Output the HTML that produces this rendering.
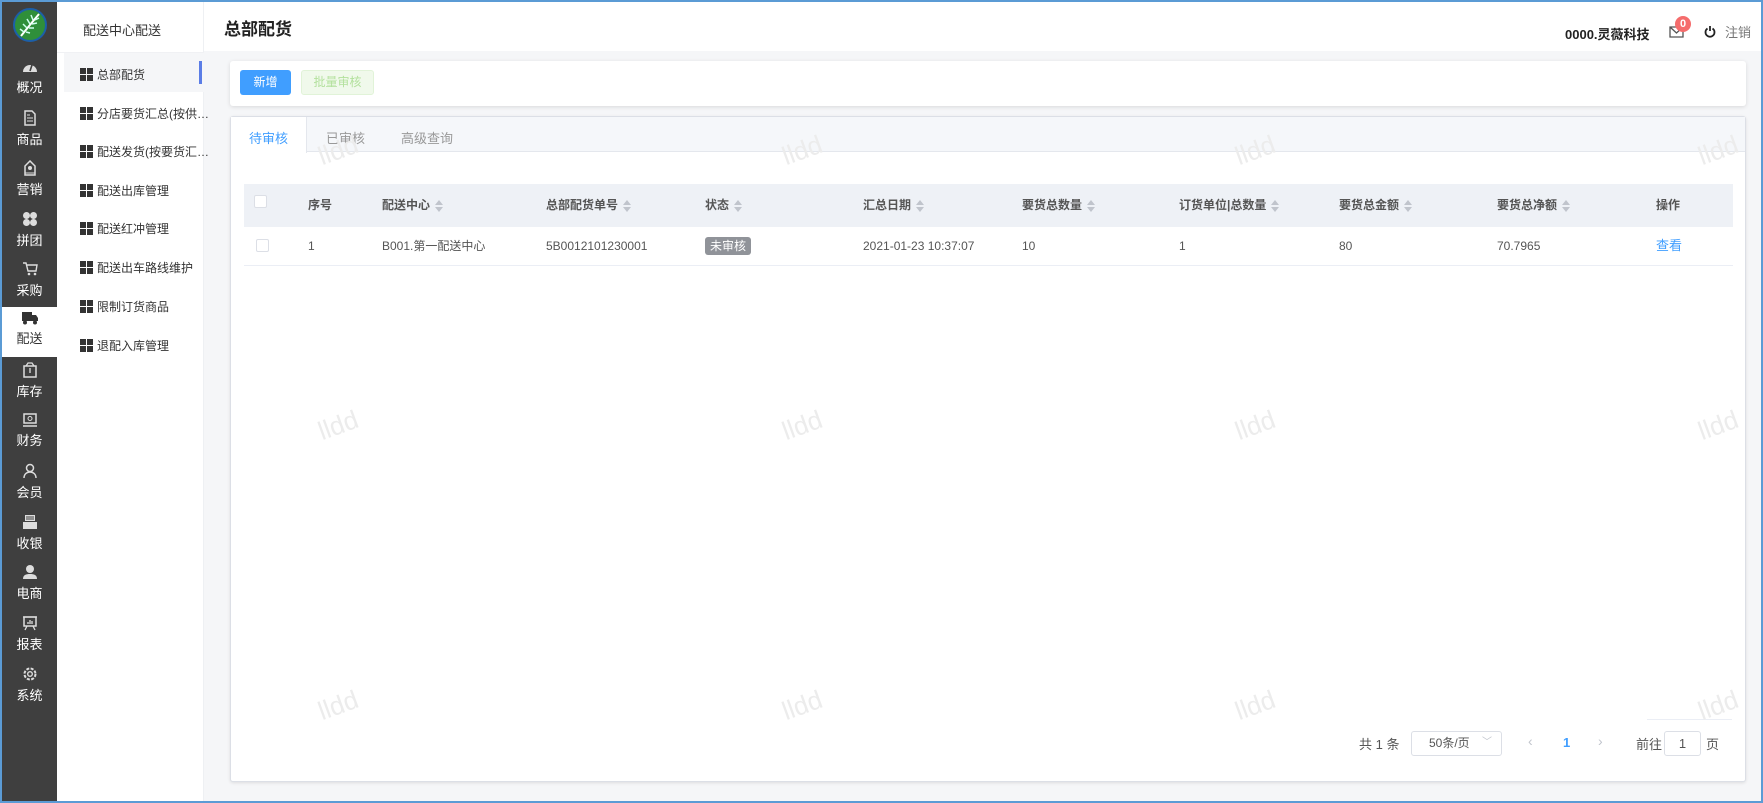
<!DOCTYPE html>
<html><head><meta charset="utf-8"><style>
*{margin:0;padding:0;box-sizing:border-box}
body{width:1763px;height:803px;overflow:hidden;background:#f5f6f8;font-family:"Liberation Sans","Noto Sans CJK SC",sans-serif;font-size:12px;color:#333;position:relative}
.a{position:absolute}
.frame{left:0;top:0;width:1763px;height:803px;border:2px solid #5b9bd5;z-index:50;pointer-events:none}
.side{left:2px;top:0;width:55px;height:803px;background:#3f3f3f}
.nav{position:absolute;left:0;width:55px;text-align:center;color:#fff;font-size:13px}
.nav svg{display:block;margin:0 auto 3px}
.sub{left:57px;top:0;width:147px;height:803px;background:#fff;border-right:1px solid #eef0f3}
.mi{position:absolute;left:23px;font-size:12px;color:#333;white-space:nowrap;display:flex;align-items:center}
.g{display:inline-block;width:13px;height:13px;margin-right:4px;background:
linear-gradient(#333,#333) 0 0/6px 6px no-repeat,linear-gradient(#333,#333) 7px 0/6px 6px no-repeat,linear-gradient(#333,#333) 0 7px/6px 6px no-repeat,linear-gradient(#333,#333) 7px 7px/6px 6px no-repeat}
.hdr{left:204px;top:0;width:1557px;height:51px;background:#fff}
.card{background:#fff;box-shadow:0 1px 4px rgba(0,0,0,.12);border-radius:3px}
.th{position:absolute;top:0;height:43px;line-height:43px;font-weight:bold;color:#555;font-size:12px;white-space:nowrap}
.td{position:absolute;top:43px;height:38px;line-height:38px;color:#555;font-size:12px;white-space:nowrap}
.s{display:inline-block;vertical-align:middle;margin-left:5px;width:8px;height:12px;position:relative}
.s:before{content:"";position:absolute;left:0;top:0;border:4px solid transparent;border-bottom:5px solid #c0c4cc;border-top:0}
.s:after{content:"";position:absolute;left:0;top:7px;border:4px solid transparent;border-top:5px solid #c0c4cc;border-bottom:0}
.wm{position:absolute;font-size:26px;color:#ececec;transform:rotate(-20deg);font-family:"Liberation Sans",sans-serif;z-index:5}
.cb{position:absolute;width:13px;height:13px;border:1px solid #dcdfe6;background:#fff;border-radius:2px}
</style></head><body>
<div class="a side">
  <div class="a" style="left:11px;top:8px;width:34px;height:34px;border-radius:50%;background:#2f8f3a;border:2px solid #1c5fa8;overflow:hidden">
    <svg width="30" height="30" viewBox="0 0 30 30"><path d="M6 26 Q14 16 24 4" stroke="#fff" stroke-width="2" fill="none"/><path d="M9 22l-4-3M12 18l-4-4M15 14l-3-5M18 10l-2-5M11 22l4 1M14 18l5 0M17 14l5-1M20 10l4-2" stroke="#cfe" stroke-width="1.5"/></svg>
  </div>
  <div class="nav" style="top:60px"><svg width="16" height="14" viewBox="0 0 16 14"><path d="M1 12a7 7 0 1 1 14 0z" fill="#ddd"/><path d="M8 11l2-6" stroke="#3f3f3f" stroke-width="1.6"/></svg>概况</div>
  <div class="nav" style="top:110px"><svg width="14" height="16" viewBox="0 0 14 16"><path d="M2 1h7l3 3v11H2z" fill="none" stroke="#ddd" stroke-width="1.5"/><path d="M4 8h6M4 11h6M4 5h3" stroke="#ddd"/></svg>商品</div>
  <div class="nav" style="top:160px"><svg width="14" height="16" viewBox="0 0 14 16"><path d="M2 15V6l5-5 5 5v9z" fill="none" stroke="#ddd" stroke-width="1.5"/><circle cx="7" cy="8" r="2" fill="#ddd"/><path d="M2 13h10" stroke="#ddd"/></svg>营销</div>
  <div class="nav" style="top:211px"><svg width="16" height="16" viewBox="0 0 16 16" fill="#ddd"><circle cx="4.5" cy="4.5" r="3.5"/><circle cx="11.5" cy="4.5" r="3.5"/><circle cx="4.5" cy="11.5" r="3.5"/><circle cx="11.5" cy="11.5" r="3.5"/></svg>拼团</div>
  <div class="nav" style="top:261px"><svg width="16" height="16" viewBox="0 0 16 16"><path d="M1 2h3l2 8h8l1-6H5" fill="none" stroke="#ddd" stroke-width="1.4"/><circle cx="7" cy="13" r="1.3" fill="#ddd"/><circle cx="13" cy="13" r="1.3" fill="#ddd"/></svg>采购</div>
  <div class="a" style="left:0;top:307px;width:55px;height:50px;background:#fff"></div>
  <div class="nav" style="top:311px;color:#333"><svg width="18" height="14" viewBox="0 0 18 14" fill="#333"><rect x="1" y="1" width="10" height="9"/><path d="M11 4h4l2 3v3h-6z"/><circle cx="4" cy="11.5" r="2"/><circle cx="14" cy="11.5" r="2"/></svg>配送</div>
  <div class="nav" style="top:362px"><svg width="16" height="16" viewBox="0 0 16 16"><rect x="2" y="4" width="12" height="11" fill="none" stroke="#ddd" stroke-width="1.5"/><path d="M4 4l2-3h4l2 3M8 6v5" stroke="#ddd" stroke-width="1.3" fill="none"/></svg>库存</div>
  <div class="nav" style="top:413px"><svg width="16" height="14" viewBox="0 0 16 14"><rect x="2" y="1" width="12" height="9" fill="none" stroke="#ddd" stroke-width="1.5"/><circle cx="8" cy="5.5" r="2" fill="none" stroke="#ddd"/><path d="M1 13h14" stroke="#ddd" stroke-width="1.5"/></svg>财务</div>
  <div class="nav" style="top:463px"><svg width="16" height="16" viewBox="0 0 16 16"><circle cx="8" cy="5" r="3.5" fill="none" stroke="#ddd" stroke-width="1.5"/><path d="M2 15c0-4 3-6 6-6s6 2 6 6" fill="none" stroke="#ddd" stroke-width="1.5"/></svg>会员</div>
  <div class="nav" style="top:514px"><svg width="16" height="16" viewBox="0 0 16 16" fill="#ddd"><rect x="3" y="1" width="10" height="6"/><rect x="1" y="8" width="14" height="7"/><path d="M4 3h8M4 5h8" stroke="#3f3f3f"/></svg>收银</div>
  <div class="nav" style="top:564px"><svg width="16" height="16" viewBox="0 0 16 16" fill="#ddd"><circle cx="8" cy="5" r="4"/><path d="M1 15c0-4 3-5 7-5s7 1 7 5z"/></svg>电商</div>
  <div class="nav" style="top:615px"><svg width="16" height="16" viewBox="0 0 16 16"><rect x="2" y="2" width="12" height="9" fill="none" stroke="#ddd" stroke-width="1.5"/><path d="M1 2h14M5 11l-2 4M11 11l2 4M6 9V7M8 9V5M10 9V6" stroke="#ddd" stroke-width="1.3"/></svg>报表</div>
  <div class="nav" style="top:666px"><svg width="16" height="16" viewBox="0 0 16 16"><circle cx="8" cy="8" r="5.5" fill="none" stroke="#ddd" stroke-width="2" stroke-dasharray="3 1.4"/><circle cx="8" cy="8" r="2.3" fill="none" stroke="#ddd" stroke-width="1.4"/></svg>系统</div>
</div>
<div class="a sub">
  <div class="a" style="left:26px;top:20px;font-size:13px;color:#333">配送中心配送</div>
  <div class="a" style="left:0;top:52px;width:147px;height:1px;background:#f0f1f4"></div>
  <div class="a" style="left:7px;top:53px;width:140px;height:39px;background:#f5f6f8"></div>
  <div class="a" style="left:142px;top:61px;width:3px;height:23px;background:#5b7de6"></div>
  <div class="mi" style="top:66px"><span class="g"></span>总部配货</div>
  <div class="mi" style="top:105px"><span class="g"></span>分店要货汇总(按供…</div>
  <div class="mi" style="top:143px"><span class="g"></span>配送发货(按要货汇…</div>
  <div class="mi" style="top:182px"><span class="g"></span>配送出库管理</div>
  <div class="mi" style="top:220px"><span class="g"></span>配送红冲管理</div>
  <div class="mi" style="top:259px"><span class="g"></span>配送出车路线维护</div>
  <div class="mi" style="top:298px"><span class="g"></span>限制订货商品</div>
  <div class="mi" style="top:337px"><span class="g"></span>退配入库管理</div>
</div>
<div class="a hdr">
  <div class="a" style="left:20px;top:15px;font-size:17px;font-weight:bold;color:#222">总部配货</div>
  <div class="a" style="left:1361px;top:24px;font-size:13px;font-weight:bold;color:#222">0000.灵薇科技</div>
  <svg class="a" style="left:1465px;top:26px" width="15" height="12" viewBox="0 0 15 12"><path d="M1 1h13v10H1zM1 1l6.5 6L14 1" fill="none" stroke="#555" stroke-width="1.3"/></svg>
  <div class="a" style="left:1471px;top:16px;width:16px;height:16px;border-radius:8px;background:#f56c6c;color:#fff;font-size:11px;font-weight:bold;text-align:center;line-height:16px">0</div>
  <svg class="a" style="left:1500px;top:25px" width="12" height="13" viewBox="0 0 12 13"><path d="M3.5 3.5a4.5 4.5 0 1 0 5 0" fill="none" stroke="#222" stroke-width="1.8"/><path d="M6 1v5" stroke="#222" stroke-width="1.8"/></svg>
  <div class="a" style="left:1521px;top:22px;font-size:13px;color:#777">注销</div>
</div>
<div class="a card" style="left:230px;top:61px;width:1516px;height:45px">
  <div class="a" style="left:10px;top:9px;width:51px;height:25px;background:#409eff;border-radius:3px;color:#fff;text-align:center;line-height:25px;font-size:12px">新增</div>
  <div class="a" style="left:71px;top:9px;width:73px;height:25px;background:#f0f9eb;border:1px solid #e1f3d8;border-radius:3px;color:#b3e19d;text-align:center;line-height:23px;font-size:12px">批量审核</div>
</div>
<div class="a card" style="left:230px;top:116px;width:1516px;height:666px;border:1px solid #dcdfe6;box-shadow:0 1px 3px rgba(0,0,0,.1)">
  <div class="a" style="left:0;top:0;width:1514px;height:35px;background:#f5f7fa;border-bottom:1px solid #e4e7ed"></div>
  <div class="a" style="left:0;top:0;width:76px;height:36px;background:#fff;border-right:1px solid #e4e7ed"></div>
  <div class="a" style="left:18px;top:11px;font-size:13px;color:#409eff">待审核</div>
  <div class="a" style="left:95px;top:11px;font-size:13px;color:#999">已审核</div>
  <div class="a" style="left:170px;top:11px;font-size:13px;color:#999">高级查询</div>
  <div class="a" style="left:13px;top:67px;width:1489px;height:82px">
    <div class="a" style="left:0;top:0;width:1489px;height:43px;background:#eef1f6"></div>
    <div class="cb" style="left:10px;top:11px"></div>
    <div class="th" style="left:64px">序号</div>
    <div class="th" style="left:138px">配送中心<i class="s"></i></div>
    <div class="th" style="left:302px">总部配货单号<i class="s"></i></div>
    <div class="th" style="left:461px">状态<i class="s"></i></div>
    <div class="th" style="left:619px">汇总日期<i class="s"></i></div>
    <div class="th" style="left:778px">要货总数量<i class="s"></i></div>
    <div class="th" style="left:935px">订货单位|总数量<i class="s"></i></div>
    <div class="th" style="left:1095px">要货总金额<i class="s"></i></div>
    <div class="th" style="left:1253px">要货总净额<i class="s"></i></div>
    <div class="th" style="left:1412px">操作</div>
    <div class="cb" style="left:12px;top:55px"></div>
    <div class="td" style="left:64px">1</div>
    <div class="td" style="left:138px">B001.第一配送中心</div>
    <div class="td" style="left:302px">5B0012101230001</div>
    <div class="td" style="left:461px"><span style="display:inline-block;background:#909399;color:#fff;border-radius:3px;padding:0 5px;line-height:18px;font-size:12px">未审核</span></div>
    <div class="td" style="left:619px">2021-01-23 10:37:07</div>
    <div class="td" style="left:778px">10</div>
    <div class="td" style="left:935px">1</div>
    <div class="td" style="left:1095px">80</div>
    <div class="td" style="left:1253px">70.7965</div>
    <div class="td" style="left:1412px;color:#409eff;font-size:13px">查看</div>
    <div class="a" style="left:0;top:81px;width:1489px;height:1px;background:#ebeef5"></div>
  </div>
  <div class="a" style="left:1416px;top:602px;width:85px;height:1px;background:#ebeef5"></div>
  <div class="a" style="left:1128px;top:617px;font-size:13px;color:#555">共 1 条</div>
  <div class="a" style="left:1180px;top:614px;width:91px;height:25px;border:1px solid #dcdfe6;border-radius:3px;font-size:12px;color:#555;line-height:23px;padding-left:17px">50条/页<span style="position:absolute;right:9px;top:-1px;color:#c0c4cc;font-size:10px">﹀</span></div>
  <div class="a" style="left:1297px;top:616px;color:#c0c4cc;font-size:14px">‹</div>
  <div class="a" style="left:1332px;top:618px;color:#409eff;font-size:13px;font-weight:bold">1</div>
  <div class="a" style="left:1367px;top:616px;color:#c0c4cc;font-size:14px">›</div>
  <div class="a" style="left:1405px;top:617px;font-size:13px;color:#555">前往</div>
  <div class="a" style="left:1433px;top:614px;width:37px;height:25px;border:1px solid #dcdfe6;border-radius:3px;text-align:center;line-height:23px;font-size:13px;color:#555">1</div>
  <div class="a" style="left:1475px;top:617px;font-size:13px;color:#555">页</div>
</div>
<div class="wm" style="left:318px;top:135px">lldd</div>
<div class="wm" style="left:782px;top:135px">lldd</div>
<div class="wm" style="left:1235px;top:135px">lldd</div>
<div class="wm" style="left:1698px;top:135px">lldd</div>
<div class="wm" style="left:318px;top:410px">lldd</div>
<div class="wm" style="left:782px;top:410px">lldd</div>
<div class="wm" style="left:1235px;top:410px">lldd</div>
<div class="wm" style="left:1698px;top:410px">lldd</div>
<div class="wm" style="left:318px;top:690px">lldd</div>
<div class="wm" style="left:782px;top:690px">lldd</div>
<div class="wm" style="left:1235px;top:690px">lldd</div>
<div class="wm" style="left:1698px;top:690px">lldd</div>
<div class="a frame"></div>
</body></html>
